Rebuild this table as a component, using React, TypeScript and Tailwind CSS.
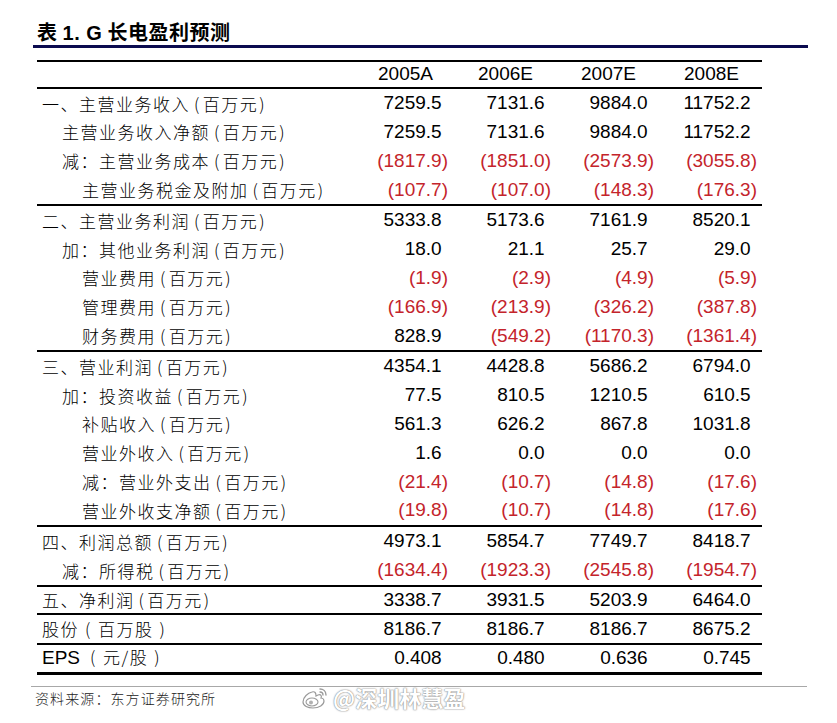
type Row = { label: string; indent: number; values: string[] }

const groups: { rowClass: string; rows: Row[] }[] = [
  {
    rowClass: "h-[28.8px]",
    rows: [
      { label: "一、主营业务收入(百万元)", indent: 0, values: ["7259.5", "7131.6", "9884.0", "11752.2"] },
      { label: "主营业务收入净额(百万元)", indent: 1, values: ["7259.5", "7131.6", "9884.0", "11752.2"] },
      { label: "减：主营业务成本(百万元)", indent: 1, values: ["(1817.9)", "(1851.0)", "(2573.9)", "(3055.8)"] },
      { label: "主营业务税金及附加(百万元)", indent: 2, values: ["(107.7)", "(107.0)", "(148.3)", "(176.3)"] },
    ],
  },
  {
    rowClass: "h-[28.8px]",
    rows: [
      { label: "二、主营业务利润(百万元)", indent: 0, values: ["5333.8", "5173.6", "7161.9", "8520.1"] },
      { label: "加：其他业务利润(百万元)", indent: 1, values: ["18.0", "21.1", "25.7", "29.0"] },
      { label: "营业费用(百万元)", indent: 2, values: ["(1.9)", "(2.9)", "(4.9)", "(5.9)"] },
      { label: "管理费用(百万元)", indent: 2, values: ["(166.9)", "(213.9)", "(326.2)", "(387.8)"] },
      { label: "财务费用(百万元)", indent: 2, values: ["828.9", "(549.2)", "(1170.3)", "(1361.4)"] },
    ],
  },
  {
    rowClass: "h-[28.8px]",
    rows: [
      { label: "三、营业利润(百万元)", indent: 0, values: ["4354.1", "4428.8", "5686.2", "6794.0"] },
      { label: "加：投资收益(百万元)", indent: 1, values: ["77.5", "810.5", "1210.5", "610.5"] },
      { label: "补贴收入(百万元)", indent: 2, values: ["561.3", "626.2", "867.8", "1031.8"] },
      { label: "营业外收入(百万元)", indent: 2, values: ["1.6", "0.0", "0.0", "0.0"] },
      { label: "减：营业外支出(百万元)", indent: 2, values: ["(21.4)", "(10.7)", "(14.8)", "(17.6)"] },
      { label: "营业外收支净额(百万元)", indent: 2, values: ["(19.8)", "(10.7)", "(14.8)", "(17.6)"] },
    ],
  },
  {
    rowClass: "h-[29px]",
    rows: [
      { label: "四、利润总额(百万元)", indent: 0, values: ["4973.1", "5854.7", "7749.7", "8418.7"] },
      { label: "减：所得税(百万元)", indent: 1, values: ["(1634.4)", "(1923.3)", "(2545.8)", "(1954.7)"] },
    ],
  },
  {
    rowClass: "h-[26px]",
    rows: [{ label: "五、净利润(百万元)", indent: 0, values: ["3338.7", "3931.5", "5203.9", "6464.0"] }],
  },
  {
    rowClass: "h-[28px]",
    rows: [{ label: "股份（百万股）", indent: 0, values: ["8186.7", "8186.7", "8186.7", "8675.2"] }],
  },
  {
    rowClass: "h-[27px]",
    rows: [{ label: "EPS（元/股）", indent: 0, values: ["0.408", "0.480", "0.636", "0.745"] }],
  },
]

const years = ["2005A", "2006E", "2007E", "2008E"]
const indents = ["pl-[5px]", "pl-[25px]", "pl-[45px]"]

const cjk = "font-['Noto_Sans_CJK_SC',sans-serif]"
const latin = "font-['Liberation_Sans',Arial,sans-serif]"
const num = `${latin} text-[19px]`

// the source uses roomy half-width parens; give them some air
function Label({ text }: { text: string }) {
  const parts = text.split(/([()（）]|EPS)/).filter(Boolean)
  return (
    <>
      {parts.map((p, i) => {
        if (p === "(") return <span key={i} className="ml-[4px] mr-[2px]">(</span>
        if (p === ")") return <span key={i} className="ml-[1px]">)</span>
        if (p === "（" || p === "）")
          return <span key={i} className="inline-block w-[19px] text-center">{p === "（" ? "(" : ")"}</span>
        if (p === "EPS") return <span key={i} className={`${latin} text-[19px] tracking-normal mr-[4px]`}>EPS</span>
        return <span key={i}>{p}</span>
      })}
    </>
  )
}

function Value({ v }: { v: string }) {
  const negative = v.startsWith("(")
  return (
    <div className={`w-[103px] text-right ${num} ${negative ? "text-[#c4242b]" : "text-black"}`}>
      {v}
      {!negative && <span className="invisible">)</span>}
    </div>
  )
}

function WeiboMark() {
  return (
    <svg width="30" height="24" viewBox="0 0 30 24" fill="none">
      <path
        d="M12 6c-4 1-9 5-9 10 0 4 5 6 10 6 6 0 11-3 11-7 0-2-2-3-3-3 1-2 0-4-3-3l-2 1c0-3-1-5-4-4z"
        fill="white"
        stroke="#9a9a9a"
        strokeWidth="1.2"
      />
      <ellipse cx="12" cy="16" rx="6" ry="4" fill="white" stroke="#9a9a9a" strokeWidth="1.1" />
      <circle cx="11" cy="16.5" r="2" fill="#b0b0b0" />
      <path d="M20 3c3 0 6 2 6 6" stroke="#9a9a9a" strokeWidth="1.4" strokeLinecap="round" />
      <path d="M20 6c1.5 0 3 1 3 3" stroke="#9a9a9a" strokeWidth="1.3" strokeLinecap="round" />
    </svg>
  )
}

export default function App() {
  return (
    <div className="w-[837px] h-[723px] bg-white overflow-hidden">
      {/* Title */}
      <div className="pt-[20px] pl-[37px] h-[44px]">
        <div className={`text-[20px] leading-[24px] font-bold text-black tracking-[0.5px] ${cjk}`}>
          表 <span className={latin}>1. G</span> 长电盈利预测
        </div>
      </div>
      <div className="ml-[33px] mt-[1px] w-[775px] h-[3px] bg-[#0b0b4f]" />

      {/* Table */}
      <div className="ml-[37px] mt-[12px] w-[725px] border-t-2 border-black">
        <div className="flex items-center h-[27px] border-b-2 border-black">
          <div className="w-[308px]" />
          {years.map((y, i) => (
            <div key={y} className={`w-[103px] text-right ${num} ${i === 0 ? "pr-[15px]" : "pr-[18px]"}`}>
              {y}
            </div>
          ))}
        </div>
        {groups.map((g, gi) => (
          <div
            key={gi}
            className={gi === groups.length - 1 ? "border-b-[3px] border-black" : "border-b-2 border-black"}
          >
            {g.rows.map((r) => (
              <div key={r.label} className={`flex items-center ${g.rowClass}`}>
                <div
                  className={`w-[308px] ${indents[r.indent]} ${cjk} font-light text-[17px] tracking-[1.5px] text-black whitespace-nowrap`}
                >
                  <Label text={r.label} />
                </div>
                {r.values.map((v, i) => (
                  <Value key={i} v={v} />
                ))}
              </div>
            ))}
          </div>
        ))}
      </div>

      {/* Footer */}
      <div className="ml-[31px] mt-[11px] w-[776px] h-px bg-[#a8a8a8]" />
      <div className="flex items-center h-[24px]">
        <div className={`pl-[35px] w-[300px] text-[14px] tracking-[1.1px] text-[#222] font-light ${cjk}`}>
          资料来源：东方证券研究所
        </div>
        <div className="flex items-center gap-[3px] -mt-[2px]">
          <WeiboMark />
          <span className={`text-[22px] text-white font-bold ${cjk} [text-shadow:0_0_1px_#777,0_0_2px_#999]`}>
            @深圳林慧盈
          </span>
        </div>
      </div>
    </div>
  )
}
